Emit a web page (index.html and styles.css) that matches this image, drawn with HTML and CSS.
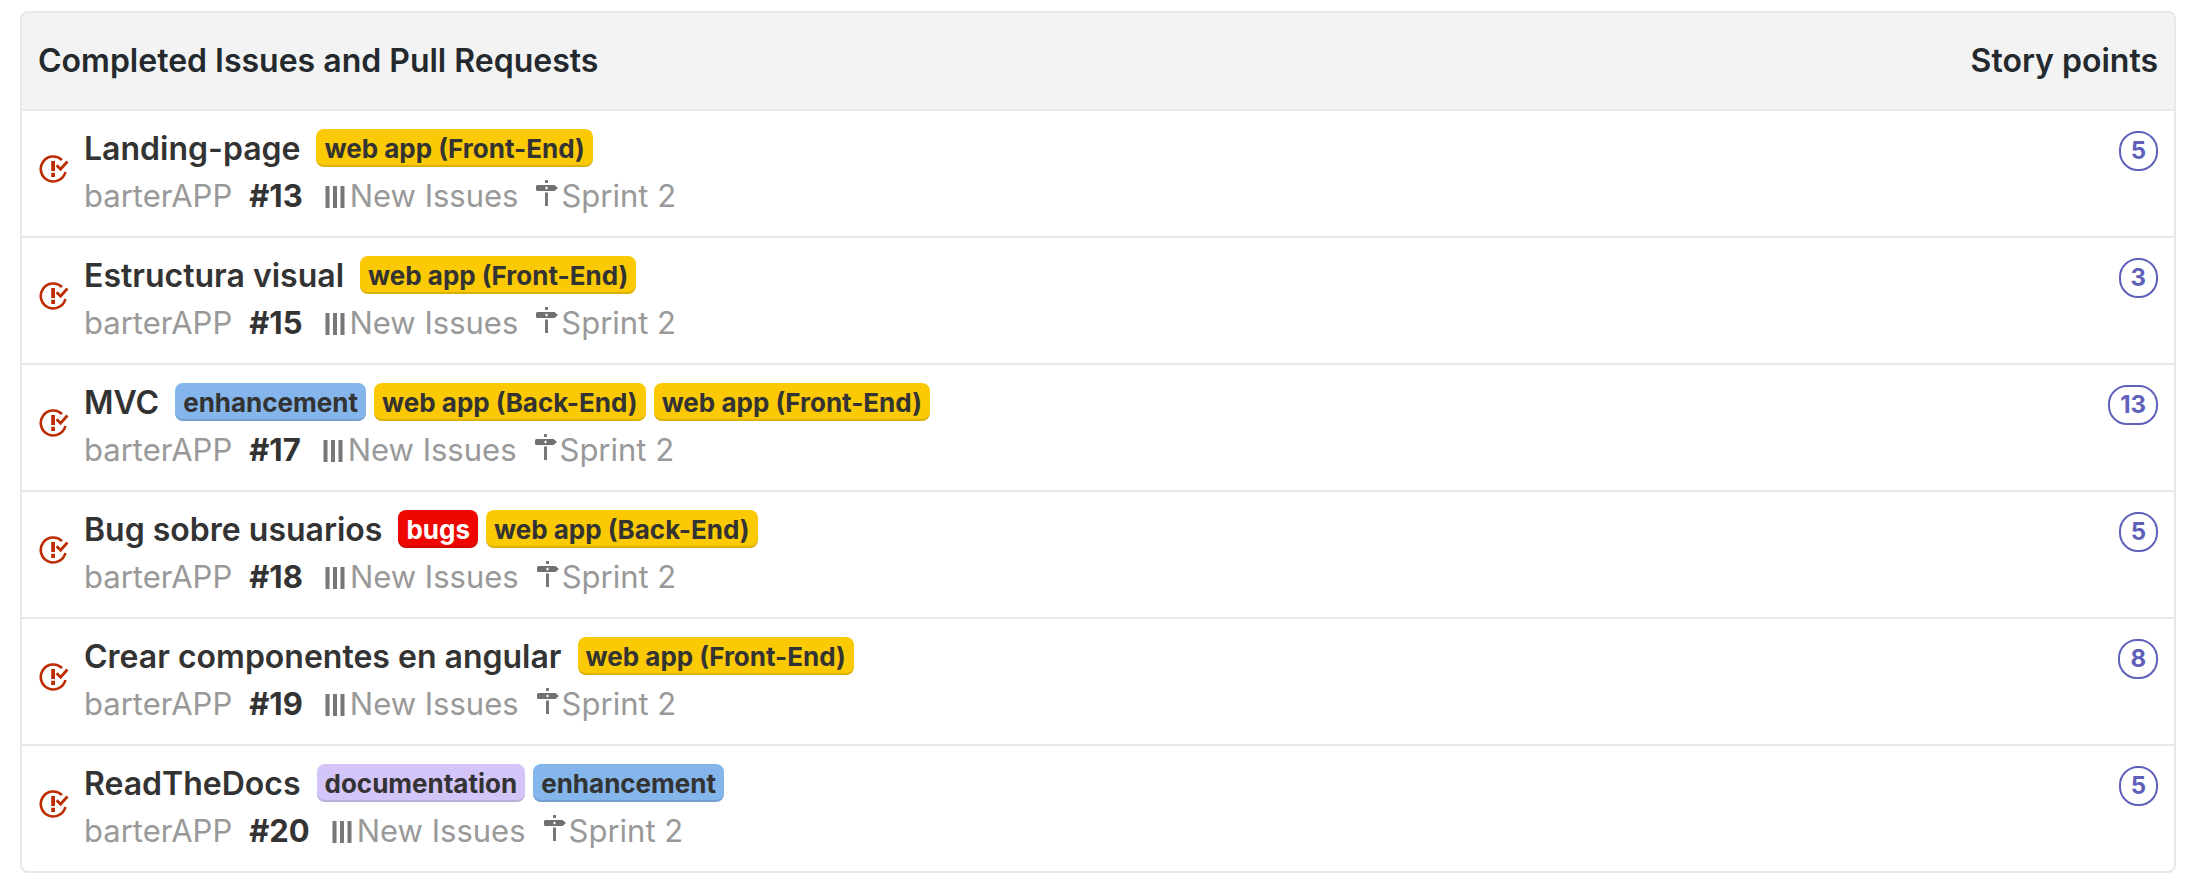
FILE: index.html
```
<!DOCTYPE html>
<html lang="en">
<head>
<meta charset="utf-8">
<title>Completed Issues and Pull Requests</title>
<link rel="stylesheet" href="styles.css">
</head>
<body>
<svg class="symbols" aria-hidden="true">
  <symbol id="closed" viewBox="0 0 30 30">
    <path d="M23 6A12.500 12.500 0 1 0 26.400 18" fill="none" stroke="#bd2c00" stroke-width="2.600"/>
    <path d="M12.200 7h3.800v10h-3.800zM12.200 18.700h3.800v4.200h-3.800z" fill="#bd2c00"/>
    <path d="M17.600 11.200l4 4 6.800-7.700" fill="none" stroke="#bd2c00" stroke-width="2.800"/>
  </symbol>
  <symbol id="pipeline" viewBox="0 0 20 22">
    <path d="M0.500 0h4v22h-4zM8 0h4v22h-4zM15.500 0h4v22h-4z" fill="#777"/>
  </symbol>
  <symbol id="milestone" viewBox="0 0 24 28">
    <path d="M10 1h3v3h-3zM10 13.500h3v13.500h-3z" fill="#777"/>
    <path fill-rule="evenodd" d="M2.500 6h17l3.500 3-3.500 3h-17a1.500 1.500 0 0 1-1.500-1.500v-3A1.500 1.500 0 0 1 2.500 6zM10.500 7.800v2.500h2v-2.500z" fill="#707070"/>
  </symbol>
</svg>
<main class="report">
  <table class="issues">
    <thead>
      <tr><th class="heading" colspan="2" scope="col">Completed Issues and Pull Requests</th><th class="heading points" scope="col">Story points</th></tr>
    </thead>
    <tbody>
      <tr>
        <td class="state"><svg class="closed-icon"><use href="#closed"/></svg></td>
        <td class="issue">
          <div class="summary"><a class="title" href="#13">Landing-page</a><div class="labels"><span class="label yellow">web app (Front-End)</span></div></div>
          <div class="meta"><span>barterAPP</span><strong class="number">#13</strong><span class="detail"><svg class="pipeline-icon"><use href="#pipeline"/></svg>New Issues</span><span class="detail"><svg class="milestone-icon"><use href="#milestone"/></svg>Sprint 2</span></div>
        </td>
        <td class="points"><span class="estimate">5</span></td>
      </tr>
      <tr>
        <td class="state"><svg class="closed-icon"><use href="#closed"/></svg></td>
        <td class="issue">
          <div class="summary"><a class="title" href="#15">Estructura visual</a><div class="labels"><span class="label yellow">web app (Front-End)</span></div></div>
          <div class="meta"><span>barterAPP</span><strong class="number">#15</strong><span class="detail"><svg class="pipeline-icon"><use href="#pipeline"/></svg>New Issues</span><span class="detail"><svg class="milestone-icon"><use href="#milestone"/></svg>Sprint 2</span></div>
        </td>
        <td class="points"><span class="estimate">3</span></td>
      </tr>
      <tr>
        <td class="state"><svg class="closed-icon"><use href="#closed"/></svg></td>
        <td class="issue">
          <div class="summary"><a class="title" href="#17">MVC</a><div class="labels"><span class="label blue">enhancement</span><span class="label yellow">web app (Back-End)</span><span class="label yellow">web app (Front-End)</span></div></div>
          <div class="meta"><span>barterAPP</span><strong class="number">#17</strong><span class="detail"><svg class="pipeline-icon"><use href="#pipeline"/></svg>New Issues</span><span class="detail"><svg class="milestone-icon"><use href="#milestone"/></svg>Sprint 2</span></div>
        </td>
        <td class="points"><span class="estimate">13</span></td>
      </tr>
      <tr>
        <td class="state"><svg class="closed-icon"><use href="#closed"/></svg></td>
        <td class="issue">
          <div class="summary"><a class="title" href="#18">Bug sobre usuarios</a><div class="labels"><span class="label red">bugs</span><span class="label yellow">web app (Back-End)</span></div></div>
          <div class="meta"><span>barterAPP</span><strong class="number">#18</strong><span class="detail"><svg class="pipeline-icon"><use href="#pipeline"/></svg>New Issues</span><span class="detail"><svg class="milestone-icon"><use href="#milestone"/></svg>Sprint 2</span></div>
        </td>
        <td class="points"><span class="estimate">5</span></td>
      </tr>
      <tr>
        <td class="state"><svg class="closed-icon"><use href="#closed"/></svg></td>
        <td class="issue">
          <div class="summary"><a class="title" href="#19">Crear componentes en angular</a><div class="labels"><span class="label yellow">web app (Front-End)</span></div></div>
          <div class="meta"><span>barterAPP</span><strong class="number">#19</strong><span class="detail"><svg class="pipeline-icon"><use href="#pipeline"/></svg>New Issues</span><span class="detail"><svg class="milestone-icon"><use href="#milestone"/></svg>Sprint 2</span></div>
        </td>
        <td class="points"><span class="estimate">8</span></td>
      </tr>
      <tr>
        <td class="state"><svg class="closed-icon"><use href="#closed"/></svg></td>
        <td class="issue">
          <div class="summary"><a class="title" href="#20">ReadTheDocs</a><div class="labels"><span class="label purple">documentation</span><span class="label blue">enhancement</span></div></div>
          <div class="meta"><span>barterAPP</span><strong class="number">#20</strong><span class="detail"><svg class="pipeline-icon"><use href="#pipeline"/></svg>New Issues</span><span class="detail"><svg class="milestone-icon"><use href="#milestone"/></svg>Sprint 2</span></div>
        </td>
        <td class="points"><span class="estimate">5</span></td>
      </tr>
    </tbody>
  </table>
</main>
</body>
</html>
```
FILE: styles.css
```
* { box-sizing: border-box; }
body {
  margin: 0;
  background: #fff;
  color: #333;
  font: 31px/36px Inter, "Liberation Sans", sans-serif;
}
.symbols { position: absolute; width: 0; height: 0; }
.report { padding: 11px 22px 7px 20px; }
.issues {
  width: 100%;
  border: 2px solid #e8e8e8;
  border-radius: 8px;
  border-spacing: 0;
  overflow: hidden;
}
.heading {
  padding: 30px 16px;
  background: #f3f3f3;
  color: #24292e;
  font-size: 32px;
  font-weight: 600;
  text-align: left;
}
.heading.points { text-align: right; }
td {
  padding: 18px 16px 22px 0;
  border-top: 2px solid #e8e8e8;
  vertical-align: top;
}
.state { width: 62px; padding: 43px 0 0 17px; }
.closed-icon { display: block; width: 30px; height: 30px; }
.summary, .labels, .meta, .detail { display: flex; align-items: center; }
.summary { gap: 16px; margin-bottom: 11px; }
.title { padding-top: 2px; color: #333; font-size: 32px; font-weight: 600; text-decoration: none; }
.labels { gap: 8px; }
.label {
  padding: 2px 8px 0;
  border-radius: 8px;
  box-shadow: inset 0 -2px 0 rgba(0, 0, 0, 0.12);
  font-size: 26px;
  font-weight: 700;
}
.yellow { background: #fbca04; }
.blue { background: #84b6eb; }
.red { background: #ee0701; color: #fff; }
.purple { background: #d4c5f9; }
.meta { gap: 17px; color: #999; }
.number { margin-right: 5px; color: #333; font-weight: 700; }
.detail { gap: 2px; }
.pipeline-icon { width: 20px; height: 22px; margin: 2px 3px 0 0; }
.milestone-icon { width: 24px; height: 28px; margin-bottom: 6px; }
td.points { padding-top: 20px; text-align: right; }
.estimate {
  display: inline-block;
  min-width: 38px;
  padding: 0 10px;
  border: 2px solid #5e60ba;
  border-radius: 19px;
  color: #5e60ba;
  font-size: 24px;
  font-weight: 700;
  line-height: 36px;
  text-align: center;
  vertical-align: top;
}
```
